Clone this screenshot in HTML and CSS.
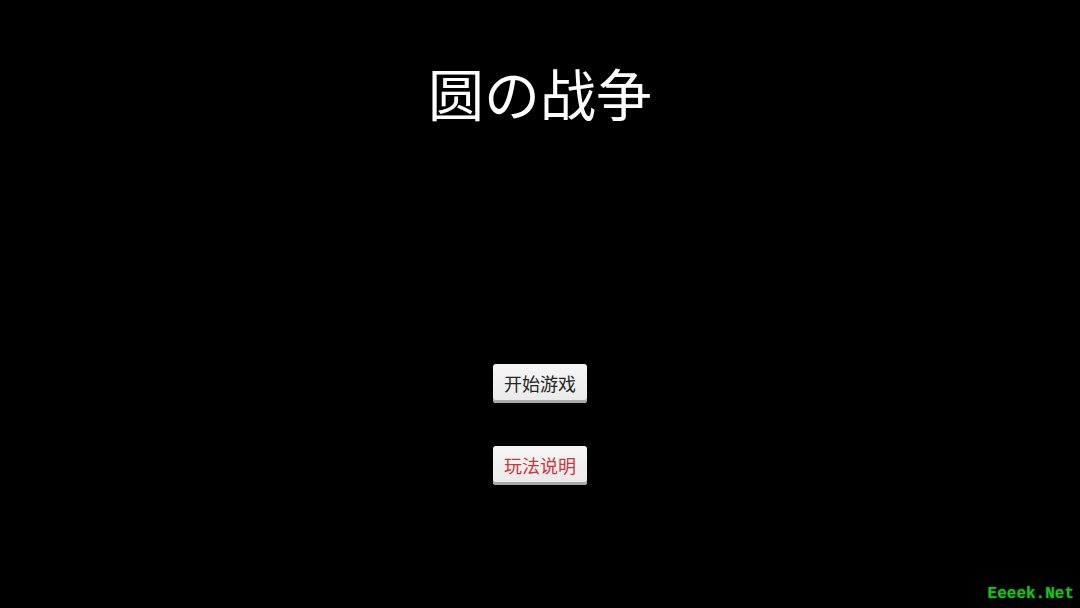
FILE: index.html
```html
<!DOCTYPE html>
<html lang="zh">
<head>
<meta charset="utf-8">
<link rel="stylesheet" href="styles.css">
</head>
<body>
<div class="screen">
  <h1 class="title">圆の战争</h1>
  <div class="menu">
    <button class="btn">开始游戏</button>
    <button class="btn btn-help">玩法说明</button>
  </div>
  <div class="watermark">Eeeek.Net</div>
</div>
</body>
</html>
```

FILE: styles.css
```css
html, body {
  margin: 0;
  padding: 0;
  background: #000;
}
.screen {
  width: 1080px;
  height: 608px;
  display: flex;
  flex-direction: column;
  align-items: center;
  font-family: "Noto Sans CJK SC", "Noto Sans", sans-serif;
  position: relative;
  overflow: hidden;
}
.title {
  margin: 62px 0 0 0;
  font-size: 56px;
  line-height: 60px;
  font-weight: 400;
  color: #fff;
}
.menu {
  margin-top: 242px;
  display: flex;
  flex-direction: column;
  align-items: center;
  gap: 43px;
}
.btn {
  width: 94px;
  height: 39px;
  padding: 0 0 1px 0;
  border: none;
  border-radius: 3px;
  background: linear-gradient(#f6f6f6, #e9e9e9);
  box-shadow: inset 0 -3px 0 #a9a9a9;
  color: #262626;
  font-family: "Noto Sans CJK SC", sans-serif;
  font-size: 18px;
  line-height: 22px;
}
.btn-help {
  color: #c8363e;
}
.watermark {
  position: absolute;
  right: 6px;
  bottom: 5px;
  font-family: "Liberation Mono", monospace;
  font-weight: 700;
  font-size: 16px;
  color: #1fbf1f;
  text-shadow: 0 0 2px #0a6a0a;
}
```
